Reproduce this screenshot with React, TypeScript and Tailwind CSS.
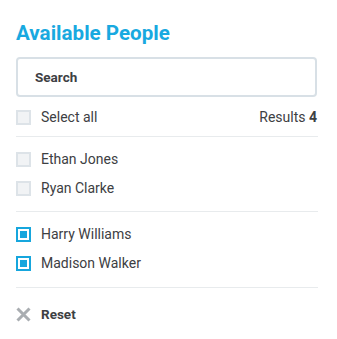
const people = [
  { name: "Ethan Jones", checked: false },
  { name: "Ryan Clarke", checked: false },
];
const selected = [
  { name: "Harry Williams", checked: true },
  { name: "Madison Walker", checked: true },
];

function Box({ checked }: { checked: boolean }) {
  if (checked) {
    return (
      <span className="w-[15px] h-[15px] border-2 border-[#16a6dd] bg-white p-[2px] flex shrink-0">
        <span className="flex-1 bg-[#16a6dd]"></span>
      </span>
    );
  }
  return <span className="w-[15px] h-[15px] border-2 border-[#dde3e8] bg-[#f1f3f5] shrink-0"></span>;
}

function Row({ name, checked }: { name: string; checked: boolean }) {
  return (
    <div className="flex items-center gap-[10px] h-[15px]">
      <Box checked={checked} />
      <span className="text-[14px] text-[#3d4043]">{name}</span>
    </div>
  );
}

export default function App() {
  return (
    <div className="w-[337px] h-[339px] bg-white px-4 pt-[21px] font-['Roboto',sans-serif]">
      <h1 className="text-[20.6px] leading-[24px] font-bold text-[#18a9e0]">Available People</h1>

      <div className="mt-3 h-10 w-[301px] border-2 border-[#d8e0e6] rounded-[4px] flex items-center pl-[17px]">
        <span className="text-[13.5px] font-bold text-[#3d4043]">Search</span>
      </div>

      <div className="mt-[13px] h-[15px] flex items-center justify-between w-[301px]">
        <Row name="Select all" checked={false} />
        <span className="text-[14px] text-[#3d4043]">
          Results <b className="font-bold">4</b>
        </span>
      </div>

      <div className="mt-[11px] border-t border-[#e8ebed] w-[302px]"></div>

      <div className="flex flex-col gap-[14px] pt-[15px]">
        {people.map((p) => (
          <Row key={p.name} name={p.name} checked={p.checked} />
        ))}
      </div>

      <div className="mt-[15px] border-t border-[#e8ebed] w-[302px]"></div>

      <div className="flex flex-col gap-[14px] pt-[15px]">
        {selected.map((p) => (
          <Row key={p.name} name={p.name} checked={p.checked} />
        ))}
      </div>

      <div className="mt-[16px] border-t border-[#e8ebed] w-[302px]"></div>

      <div className="mt-[19px] flex items-center gap-[10px] h-[15px]">
        <svg width="15" height="15" viewBox="0 0 15 15" className="shrink-0">
          <path d="M1.5 1.5 L13.5 13.5 M13.5 1.5 L1.5 13.5" stroke="#a9adb1" strokeWidth="3" />
        </svg>
        <span className="text-[13.5px] font-bold text-[#3d4043]">Reset</span>
      </div>
    </div>
  );
}
